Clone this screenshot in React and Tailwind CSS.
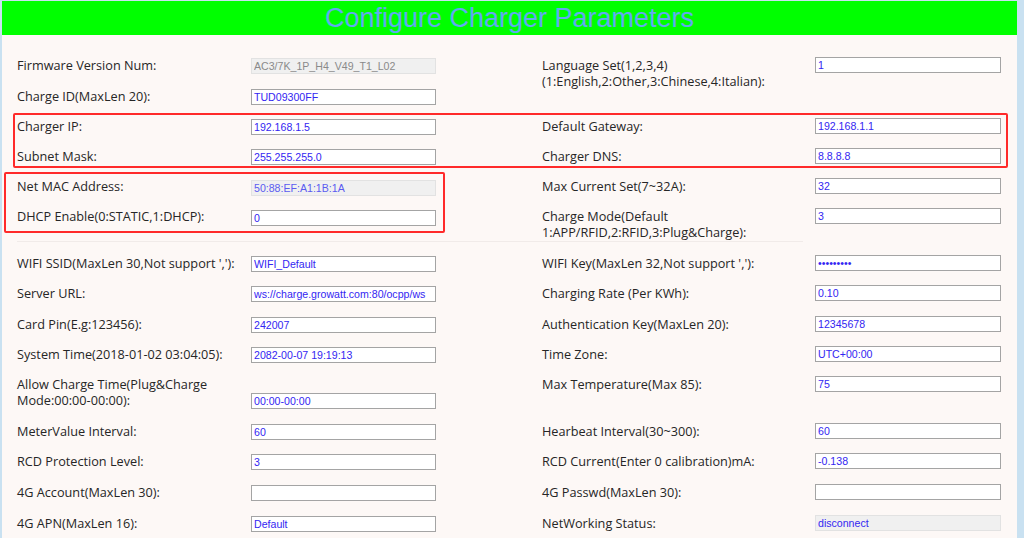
const rows = [
  {
    h: "h-[31px]",
    left: { label: "Firmware Version Num:", value: "AC3/7K_1P_H4_V49_T1_L02", disabled: true, color: "text-[#8a8a8a]" },
    right: { label: ["Language Set(1,2,3,4)", "(1:English,2:Other,3:Chinese,4:Italian):"], value: "1" },
  },
  {
    h: "h-[30px]",
    left: { label: "Charge ID(MaxLen 20):", value: "TUD09300FF" },
    right: null,
  },
  {
    h: "h-[30px]",
    left: { label: "Charger IP:", value: "192.168.1.5" },
    right: { label: "Default Gateway:", value: "192.168.1.1" },
  },
  {
    h: "h-[30px]",
    left: { label: "Subnet Mask:", value: "255.255.255.0" },
    right: { label: "Charger DNS:", value: "8.8.8.8" },
  },
  {
    h: "h-[30px]",
    left: { label: "Net MAC Address:", value: "50:88:EF:A1:1B:1A", disabled: true, color: "text-[#5b5bf0]", mt: "mt-[2px]" },
    right: { label: "Max Current Set(7~32A):", value: "32" },
  },
  {
    h: "h-[33px]",
    left: { label: "DHCP Enable(0:STATIC,1:DHCP):", value: "0", mt: "mt-[2px]" },
    right: { label: ["Charge Mode(Default", "1:APP/RFID,2:RFID,3:Plug&Charge):"], value: "3" },
    divider: true,
  },
  {
    h: "h-[30px]",
    left: { label: "WIFI SSID(MaxLen 30,Not support ','):", value: "WIFI_Default" },
    right: { label: "WIFI Key(MaxLen 32,Not support ','):", value: "123456789", password: true },
  },
  {
    h: "h-[31px]",
    left: { label: "Server URL:", value: "ws://charge.growatt.com:80/ocpp/ws" },
    right: { label: "Charging Rate (Per KWh):", value: "0.10" },
  },
  {
    h: "h-[30px]",
    left: { label: "Card Pin(E.g:123456):", value: "242007" },
    right: { label: "Authentication Key(MaxLen 20):", value: "12345678" },
  },
  {
    h: "h-[30px]",
    left: { label: "System Time(2018-01-02 03:04:05):", value: "2082-00-07 19:19:13" },
    right: { label: "Time Zone:", value: "UTC+00:00" },
  },
  {
    h: "h-[47px]",
    left: { label: ["Allow Charge Time(Plug&Charge", "Mode:00:00-00:00):"], value: "00:00-00:00", mt: "mt-[17px]" },
    right: { label: "Max Temperature(Max 85):", value: "75" },
  },
  {
    h: "h-[30px]",
    left: { label: "MeterValue Interval:", value: "60" },
    right: { label: "Hearbeat Interval(30~300):", value: "60" },
  },
  {
    h: "h-[31px]",
    left: { label: "RCD Protection Level:", value: "3" },
    right: { label: "RCD Current(Enter 0 calibration)mA:", value: "-0.138" },
  },
  {
    h: "h-[31px]",
    left: { label: "4G Account(MaxLen 30):", value: "" },
    right: { label: "4G Passwd(MaxLen 30):", value: "" },
  },
  {
    h: "h-[23px]",
    left: { label: "4G APN(MaxLen 16):", value: "Default" },
    right: { label: "NetWorking Status:", value: "disconnect", disabled: true },
  },
];

function Field({ item, labelWidth, inputWidth, defaultMt }) {
  if (!item) return <div className="flex-1" />;
  const lines = Array.isArray(item.label) ? item.label : [item.label];
  return (
    <div className="flex items-start">
      <div className={`${labelWidth} shrink-0 text-[12.7px] leading-[16px] text-[#262626]`}>
        {lines.map((line) => (
          <div key={line} className="whitespace-nowrap">
            {line}
          </div>
        ))}
      </div>
      <input
        readOnly
        type={item.password ? "password" : "text"}
        value={item.value}
        className={`${inputWidth} ${item.mt || defaultMt} h-[16px] border px-[2px] font-['Liberation_Sans',Arial,sans-serif] text-[10.6px] leading-[14px] outline-none ${
          item.disabled ? "border-[#e2e2e2] bg-[#f0f0f0]" : "border-[#a4a4a4] bg-white"
        } ${item.color || "text-[#3326f2]"}`}
      />
    </div>
  );
}

export default function App() {
  return (
    <div className="relative h-[538px] w-[1024px] overflow-hidden bg-[#c9e1f1] pl-[2px] pr-[7px] pt-[1px] font-['Open_Sans','Noto_Sans',sans-serif]">
      <div className="h-full bg-[#fdf8f6]">
        <header className="h-[34px] bg-[#00ff00] text-center font-['Liberation_Sans',Arial,sans-serif] text-[27px] leading-[34px] text-[#62a9f0]">
          Configure Charger Parameters
        </header>

        <div className="pt-[22px]">
          {rows.map((r, i) => (
            <div key={i}>
              <div className={`${r.h} flex pl-[15px]`}>
                <div className="w-[525px] shrink-0">
                  <Field item={r.left} labelWidth="w-[234px]" inputWidth="w-[185px]" defaultMt="mt-[1px]" />
                </div>
                <div>
                  <Field item={r.right} labelWidth="w-[273px]" inputWidth="w-[186px]" defaultMt="mt-0" />
                </div>
              </div>
              {r.divider && (
                <div className="mb-[13px] ml-[15px] h-px w-[786px] bg-[#f1ebe9]" />
              )}
            </div>
          ))}
        </div>
      </div>

      <div className="pointer-events-none absolute left-[13px] top-[113px] h-[55px] w-[995px] rounded-[2px] border-2 border-[#ff2a2a]" />
      <div className="pointer-events-none absolute left-[4px] top-[172px] h-[61px] w-[441px] rounded-[2px] border-2 border-[#ff2a2a]" />
    </div>
  );
}
